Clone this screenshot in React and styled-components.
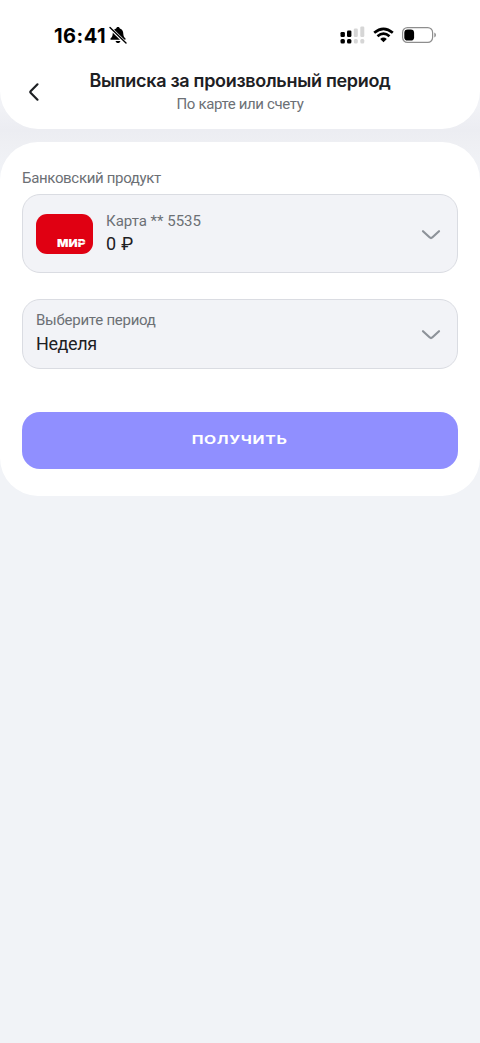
import React from 'react'
import styled, { createGlobalStyle } from 'styled-components'

const GlobalStyle = createGlobalStyle`
  * {
    box-sizing: border-box;
  }

  body {
    margin: 0;
    background-color: #f1f3f7;
    color: #1d2023;
    font-family: Inter, 'Liberation Sans', sans-serif;
  }

  button {
    font-family: inherit;
    color: inherit;
    cursor: pointer;
  }
`

const Page = styled.div`
  display: flex;
  flex-direction: column;
  gap: 13px;
  min-height: 1043px;
  background: linear-gradient(#f1f2f6 0, #f1f2f6 105px, #ecedf2 130px, #eeeff3 142px, #f1f3f7 175px);
`

const Header = styled.header`
  height: 129px;
  border-radius: 0 0 38px 38px;
  background-color: #fff;
`

const StatusBar = styled.div`
  display: flex;
  align-items: center;
  justify-content: space-between;
  height: 70px;
  padding: 0 44px 0 54px;
`

const StatusGroup = styled.div`
  display: flex;
  align-items: center;
  gap: ${(props) => props.$gap}px;
`

const Time = styled.span`
  padding-top: 1px;
  color: #000;
  font-size: 20px;
  font-weight: 750;
  line-height: 24px;
  letter-spacing: 0.5px;
`

const NavBar = styled.div`
  display: grid;
  grid-template-columns: 64px 1fr 64px;
`

const BackButton = styled.button`
  display: flex;
  align-items: center;
  height: 44px;
  border: none;
  padding: 0 0 0 27px;
  background-color: transparent;
`

const Titles = styled.div`
  display: flex;
  flex-direction: column;
  align-items: center;
  white-space: nowrap;
`

const Title = styled.h1`
  margin: -2px 0 0;
  font-size: 18px;
  font-weight: 600;
  line-height: 25px;
  letter-spacing: -0.31px;
`

const Subtitle = styled.span`
  color: #6c7075;
  font-family: Roboto, sans-serif;
  font-size: 15px;
  line-height: 23px;
  letter-spacing: -0.35px;
`

const Card = styled.main`
  display: flex;
  flex-direction: column;
  height: 354px;
  border-radius: 38px;
  padding: 26px 22px;
  background-color: #fff;
`

const Label = styled.span`
  color: #6c7075;
  font-family: Roboto, sans-serif;
  font-size: 15px;
  line-height: 20px;
  letter-spacing: ${(props) => props.$spacing || 0}px;
`

const Select = styled.button`
  display: flex;
  align-items: center;
  height: ${(props) => props.$height}px;
  margin-top: ${(props) => props.$top}px;
  border: 1px solid #dadce2;
  border-radius: 18px;
  padding: 0 16px 0 13px;
  background-color: #f2f3f7;
  text-align: left;
`

const SelectText = styled.span`
  display: flex;
  flex: 1;
  flex-direction: column;
  gap: ${(props) => props.$gap}px;
  padding-bottom: ${(props) => props.$bottom}px;
`

const Value = styled.span`
  font-family: Roboto, sans-serif;
  font-size: 18px;
  line-height: 22px;
  letter-spacing: ${(props) => props.$spacing || 0}px;
`

const BankCard = styled.span`
  display: flex;
  align-items: flex-end;
  justify-content: flex-end;
  width: 57px;
  height: 40px;
  margin-right: 13px;
  border-radius: 11px;
  padding: 0 7px 5px 0;
  background-color: #e00012;
`

const SubmitButton = styled.button`
  height: 57px;
  margin-top: 43px;
  border: none;
  border-radius: 18px;
  padding: 0 0 1px;
  background-color: #908fff;
`

const SubmitText = styled.span`
  display: inline-block;
  color: #fff;
  font-size: 12px;
  font-weight: 650;
  line-height: 18px;
  letter-spacing: 0.5px;
  transform: scaleX(1.31);
`

const BellOff = () => (
  <svg width="18" height="18" viewBox="0 0 18 18">
    <path
      d="M9 1C7.900 1 7.300 1.700 7.200 2.500C4.700 3.200 3.800 5.200 3.700 7.700C3.600 10.200 2.900 11 1.700 12.200C1.100 12.900 1.400 13.800 2.300 13.800H15.700C16.600 13.800 16.900 12.900 16.300 12.200C15.100 11 14.400 10.200 14.300 7.700C14.200 5.200 13.300 3.200 10.800 2.500C10.700 1.700 10.100 1 9 1ZM6.600 14.900C6.900 16.200 7.800 17 9 17S11.100 16.200 11.400 14.900Z"
      fill="#000"
    />
    <path d="M0.500 1.300L16.700 17.200" stroke="#fff" strokeWidth="3.200" />
    <path d="M1 1.500L17 17" stroke="#000" strokeWidth="1.400" strokeLinecap="round" />
  </svg>
)

const Signal = () => (
  <svg width="25" height="18" viewBox="0 0 25 18">
    <rect x="0.500" y="6" width="4.400" height="5" rx="1.200" />
    <rect x="7" y="4.500" width="4.400" height="6.500" rx="1.200" />
    <rect x="13.800" y="2.500" width="4" height="8.500" rx="1.200" fill="#d6d6d6" />
    <rect x="20.300" y="0.500" width="4" height="10.500" rx="1.200" fill="#d6d6d6" />
    <rect x="0.500" y="13" width="4.400" height="4.400" rx="1.500" />
    <rect x="7" y="13" width="4.400" height="4.400" rx="1.500" />
    <rect x="13.800" y="13" width="4" height="4.400" rx="1.500" fill="#d6d6d6" />
    <rect x="20.300" y="13" width="4" height="4.400" rx="1.500" fill="#d6d6d6" />
  </svg>
)

const Wifi = () => (
  <svg width="21" height="16" viewBox="0 0 21 16" fill="none" stroke="#000" strokeWidth="2.700">
    <path d="M1.200 5.800Q10.500 -2.200 19.800 5.800" />
    <path d="M4.500 9.300Q10.500 4.100 16.500 9.300" />
    <path d="M10.500 15.300L7.200 12Q10.500 9.200 13.800 12Z" fill="#000" stroke="none" />
  </svg>
)

const Battery = () => (
  <svg width="34" height="16" viewBox="0 0 34 16">
    <rect x="0.600" y="0.600" width="30" height="14.800" rx="4.800" fill="none" stroke="#8e8e8e" strokeWidth="1.200" />
    <rect x="2.300" y="2.400" width="9.800" height="11.200" rx="3.400" />
    <path d="M32.300 5.500Q34 6.400 34 8T32.300 10.500Z" fill="#8e8e8e" />
  </svg>
)

const ArrowBack = () => (
  <svg width="14" height="20" viewBox="0 0 14 20" fill="none">
    <path
      d="M10.500 2.300L3.600 9.200Q2.800 10 3.600 10.800L10.500 17.700"
      stroke="#1d2023"
      strokeWidth="2.200"
      strokeLinecap="round"
    />
  </svg>
)

const ArrowDown = () => (
  <svg width="20" height="14" viewBox="0 0 20 14" fill="none">
    <path
      d="M2 4.200L8.800 10.500Q10 11.500 11.200 10.500L18 4.200"
      stroke="#8d9299"
      strokeWidth="2.200"
      strokeLinecap="round"
    />
  </svg>
)

const MirLogo = () => (
  <svg width="29" height="12" viewBox="0 0 29 12">
    <text
      x="0"
      y="9.500"
      fill="#fff"
      fontFamily="Inter, sans-serif"
      fontSize="11"
      fontWeight="900"
      textLength="28.500"
      lengthAdjust="spacingAndGlyphs"
    >
      МИР
    </text>
    <path d="M19.500 4.100Q23 5.500 29 5.200" fill="none" stroke="#e00012" strokeWidth="0.700" />
  </svg>
)

const App = () => {
  return (
    <>
      <GlobalStyle />
      <Page>
        <Header>
          <StatusBar>
            <StatusGroup $gap={3}>
              <Time>16:41</Time>
              <BellOff />
            </StatusGroup>
            <StatusGroup $gap={8}>
              <Signal />
              <Wifi />
              <Battery />
            </StatusGroup>
          </StatusBar>
          <NavBar>
            <BackButton aria-label="Назад">
              <ArrowBack />
            </BackButton>
            <Titles>
              <Title>Выписка за произвольный период</Title>
              <Subtitle>По карте или счету</Subtitle>
            </Titles>
          </NavBar>
        </Header>
        <Card>
          <Label $spacing={-0.33}>Банковский продукт</Label>
          <Select $height={79} $top={6}>
            <BankCard>
              <MirLogo />
            </BankCard>
            <SelectText $gap={2} $bottom={2}>
              <Label>Карта ** 5535</Label>
              <Value $spacing={0.3}>0 ₽</Value>
            </SelectText>
            <ArrowDown />
          </Select>
          <Select $height={70} $top={26}>
            <SelectText $gap={3} $bottom={3}>
              <Label $spacing={-0.25}>Выберите период</Label>
              <Value $spacing={-0.4}>Неделя</Value>
            </SelectText>
            <ArrowDown />
          </Select>
          <SubmitButton>
            <SubmitText>ПОЛУЧИТЬ</SubmitText>
          </SubmitButton>
        </Card>
      </Page>
    </>
  )
}

export default App
